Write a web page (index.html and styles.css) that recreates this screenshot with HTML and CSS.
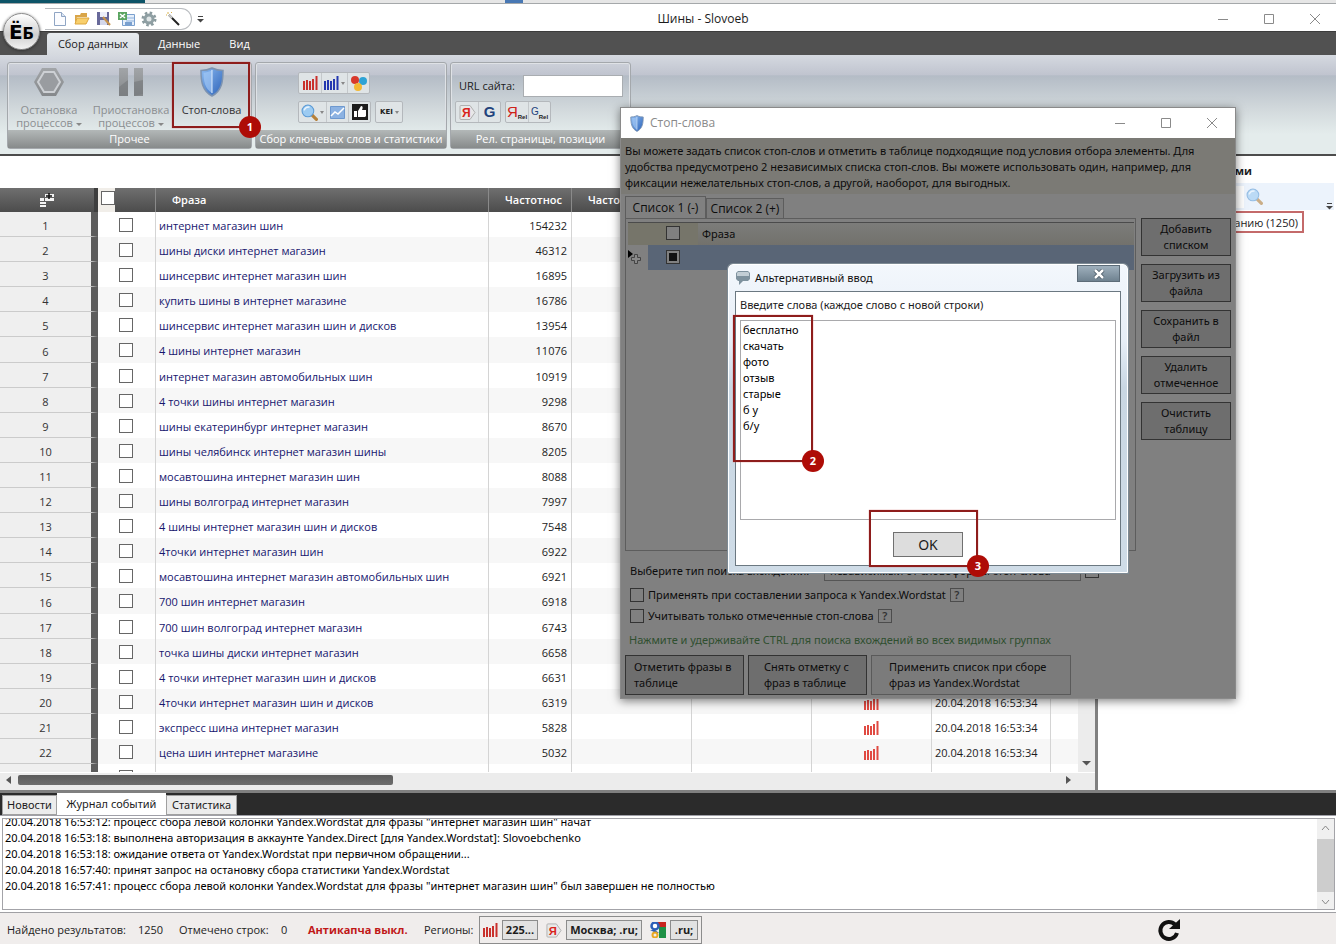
FILE: index.html
```html
<!DOCTYPE html>
<html lang="ru">
<head>
<meta charset="utf-8">
<title>Шины - Slovoeb</title>
<link rel="stylesheet" href="styles.css">
</head>
<body>
<svg class="defs" aria-hidden="true">
  <defs>
    <linearGradient id="shieldFill" x1="0" y1="0" x2="1" y2="1"><stop offset="0" stop-color="#8dbcf2"/><stop offset="1" stop-color="#2c62b8"/></linearGradient>
    <linearGradient id="grayFill" x1="0" y1="0" x2="0" y2="1"><stop offset="0" stop-color="#a2a5a8"/><stop offset="1" stop-color="#85888b"/></linearGradient>
    <symbol id="bars" viewBox="0 0 15 14"><path d="M1 5v9M4 4v10M7 5v9M10 3v11M13.500 0v14" stroke="currentColor" stroke-width="2" fill="none"/></symbol>
    <symbol id="shield" viewBox="0 0 24 30"><path d="M12 1C8 3 4 3.500 1 3.500C1 14 2 24 12 29C22 24 23 14 23 3.500C20 3.500 16 3 12 1Z" fill="url(#shieldFill)" stroke="#7d93b0" stroke-width="1.500"/><path d="M12 3C9 5 6 5.500 3.500 5.500C3.500 14 5 22 12 26Z" fill="#a9cdf8" opacity=".6"/><path d="M12 3v23" stroke="#dcebfc"/></symbol>
    <symbol id="lens" viewBox="0 0 16 16"><path d="M10 10l4.500 4.500" stroke="#b5803a" stroke-width="3" stroke-linecap="round"/><circle cx="6.500" cy="6.500" r="5.500" fill="#9ccbf2" stroke="#5b9ad5"/><path d="M3 6a4 4 0 0 1 5-3" stroke="#eaf5fe" stroke-width="1.500" fill="none"/></symbol>
    <symbol id="yandex" viewBox="0 0 17 17"><path d="M2 1.500h9l5 7-5 7H2a1 1 0 0 1-1-1v-12a1 1 0 0 1 1-1Z" fill="#e8e8e8" stroke="#b0b0b0"/><text class="ya-letter" x="3" y="13">Я</text></symbol>
  </defs>
</svg>

<div class="backdrop"><span></span></div>

<header class="titlebar">
  <div class="quick">
    <button class="quick-btn" aria-label="Создать"><svg width="16" height="16" viewBox="0 0 16 16"><path d="M2.500 1.500h7l4 4v9h-11Z" fill="#fbfcff" stroke="#8fa5c4"/><path d="M9.500 1.500v4h4" fill="#dce6f4" stroke="#8fa5c4"/></svg></button>
    <button class="quick-btn" aria-label="Открыть"><svg width="16" height="16" viewBox="0 0 16 16"><path d="M1 4h5l1-2h6v4H3l-2 7Z" fill="#d9a548"/><path d="M3 7h12l-3 6H1Z" fill="#f8cf6c" stroke="#dca63e"/></svg></button>
    <button class="quick-btn" aria-label="Сохранить"><svg width="16" height="16" viewBox="0 0 16 16"><path d="M1 1h12v13H1Z" fill="#68699a"/><path d="M4 1h7v5H4Z" fill="#eceefa"/><path d="M4 9h7v5H4Z" fill="#d3d7ea"/><path d="M7 6l7 8" stroke="#c6934b" stroke-width="2"/></svg></button>
    <button class="quick-btn" aria-label="Экспорт"><svg width="17" height="16" viewBox="0 0 17 16"><path d="M4.500 3.500h12v11h-12Z" fill="#e6effa" stroke="#7aa0cf"/><path d="M8 7h8M8 10h8" stroke="#8db1dd"/><path d="M7 11h7v4H7Z" fill="#7aa0cf"/><path d="M0 1h9v8H0Z" fill="#5aa561"/><path d="M2 3l5 4M7 3L2 7" stroke="#fff" stroke-width="1.500"/></svg></button>
    <button class="quick-btn" aria-label="Настройки"><svg width="16" height="16" viewBox="0 0 16 16"><circle cx="8" cy="8" r="6" fill="none" stroke="#8a9a9e" stroke-width="3" stroke-dasharray="2.400 2.300"/><circle cx="8" cy="8" r="4" fill="#e0e6e7" stroke="#8f9fa3" stroke-width="3"/></svg></button>
    <button class="quick-btn wand" aria-label="Мастер"><svg width="16" height="16" viewBox="0 0 16 16"><path d="M4 4l10 10" stroke="#222" stroke-width="2"/><path d="M4 4l3 3" stroke="#c9c9c9" stroke-width="2"/><path d="M3 1v2M1 4h1M6 2l1-1" stroke="#d8b24a"/></svg></button>
  </div>
  <button class="quick-more" aria-label="Ещё"><svg width="7" height="8" viewBox="0 0 7 8"><path d="M1 1.500h5" stroke="#444"/><path d="M0 4h7L3.500 7.500Z" fill="#444"/></svg></button>
  <h1 class="title">Шины - Slovoeb</h1>
  <div class="win-buttons">
    <button aria-label="Свернуть"><svg width="12" height="12" viewBox="0 0 12 12"><path d="M1 6.500h10"/></svg></button>
    <button aria-label="Развернуть"><svg width="12" height="12" viewBox="0 0 12 12"><path d="M1.500 1.500h9v9h-9Z"/></svg></button>
    <button aria-label="Закрыть"><svg width="12" height="12" viewBox="0 0 12 12"><path d="M1 1l10 10M11 1L1 11"/></svg></button>
  </div>
  <div class="logo">Ё<small>Б</small></div>
</header>

<nav class="tabs">
  <button class="tab active">Сбор данных</button>
  <button class="tab">Данные</button>
  <button class="tab">Вид</button>
</nav>

<section class="ribbon">
  <div class="group group-misc">
    <div class="group-body big">
      <button class="big-btn off"><svg width="32" height="30" viewBox="0 0 32 30"><path d="M9 1h14l8 14-8 14H9L1 15Z" fill="url(#grayFill)"/><path d="M11 5h10l6 10-6 10H11L5 15Z" fill="#999ca0" stroke="#cdd0d4" stroke-width="2"/></svg><span>Остановка<br>процессов <i class="caret"></i></span></button>
      <button class="big-btn off"><svg width="26" height="30" viewBox="0 0 26 30"><path d="M1 1h9v28H1ZM16 1h9v28h-9Z" fill="url(#grayFill)"/><path d="M1 20l9-7v16H1ZM16 15l9-2v14l-9 2Z" fill="#75787b" opacity=".6"/></svg><span>Приостановка<br>процессов <i class="caret"></i></span></button>
      <button class="big-btn stop"><svg width="26" height="30"><use href="#shield"/></svg><span>Стоп-слова</span></button>
      <div class="mark mark-1"><b class="badge">1</b></div>
    </div>
    <div class="group-name">Прочее</div>
  </div>
  <div class="group group-keys">
    <div class="group-body rows">
      <div class="tool-row">
        <div class="tools"><button class="red" aria-label="Wordstat"><svg width="15" height="14"><use href="#bars"/></svg></button><button class="blue" aria-label="Статистика"><svg width="15" height="14"><use href="#bars"/></svg><i class="caret"></i></button><button aria-label="Подсказки"><svg width="16" height="17" viewBox="0 0 16 17"><circle cx="4" cy="5" r="4" fill="#d8392c"/><circle cx="12" cy="6" r="4" fill="#2ea3d5"/><circle cx="7" cy="12" r="4" fill="#f3b834"/></svg></button></div>
      </div>
      <div class="tool-row">
        <div class="tools"><button aria-label="Поиск"><svg width="17" height="17"><use href="#lens"/></svg><i class="caret"></i></button><button aria-label="График"><svg width="15" height="13" viewBox="0 0 15 13"><path d="M.5.5h14v12H.5Z" fill="#8cb2e2" stroke="#6d98cf"/><path d="M1 10l4-4 3 2 6-6" stroke="#fff" fill="none" stroke-width="1.500"/></svg></button><button aria-label="Нравится"><svg width="16" height="16" viewBox="0 0 16 16"><path d="M0 0h16v16H0Z" fill="#1c1c1c"/><path d="M2 7h3v6H2ZM6 7l3-5c2 0 2 2 1 4h4v6l-1 1H6Z" fill="#fff"/></svg></button></div>
        <div class="tools"><button class="kei">KEI <i class="caret"></i></button></div>
      </div>
    </div>
    <div class="group-name">Сбор ключевых слов и статистики</div>
  </div>
  <div class="group group-pos">
    <div class="group-body rows">
      <div class="url-row"><label for="url">URL сайта:</label><input id="url" type="text"></div>
      <div class="tool-row left">
        <div class="tools"><button aria-label="Яндекс"><svg width="17" height="17"><use href="#yandex"/></svg></button><button class="g">G</button></div>
        <div class="tools"><button class="ya">Я<small>Rel</small></button><button class="g small">G<small>Rel</small></button></div>
      </div>
    </div>
    <div class="group-name">Рел. страницы, позиции</div>
  </div>
</section>

<main class="work">
  <section class="grid-pane">
    <div class="grid-main">
      <div class="grid-clip">
        <table class="grid">
          <colgroup><col class="c-num"><col class="c-check"><col class="c-phrase"><col class="c-freq"><col class="c-wide"><col class="c-wide"><col class="c-wide"><col class="c-date"><col></colgroup>
          <thead><tr>
            <th class="num"><svg width="14" height="14" viewBox="0 0 14 14"><path d="M5 1h9v3H5ZM5 5h9v3H5ZM0 5h4v3H0ZM0 9h6v2H0ZM0 12h6v2H0Z" fill="#f2f2f2"/><path d="M9 0v6M6 3h6" stroke="#111" stroke-width="1.500"/></svg></th>
            <th class="all"><input type="checkbox" aria-label="Отметить все"></th>
            <th class="name">Фраза</th><th class="freq">Частотнос</th><th class="freq">Частотнос</th><th></th><th></th><th></th><th></th>
          </tr></thead>
          <tbody id="rows"></tbody>
        </table>
      </div>
      <div class="vscroll"><svg width="9" height="5" viewBox="0 0 9 5"><path d="M0 0h9L4.500 4.500Z" fill="#555"/></svg></div>
    </div>
    <div class="hscroll">
      <svg width="5" height="8" viewBox="0 0 5 8"><path d="M5 0v8L0 4Z" fill="#555"/></svg>
      <div class="track"><div class="thumb"></div></div>
      <svg width="5" height="8" viewBox="0 0 5 8"><path d="M0 0v8L5 4Z" fill="#555"/></svg>
    </div>
  </section>
  <aside class="side">
    <h2>ами</h2>
    <div class="side-tools"><input type="text" aria-label="Поиск группы"><svg class="lens" width="17" height="17"><use href="#lens"/></svg><svg class="more" width="7" height="8" viewBox="0 0 7 8"><path d="M1 1.500h5" stroke="#444"/><path d="M0 4h7L3.500 7.500Z" fill="#444"/></svg></div>
    <div class="side-item">анию (1250)</div>
  </aside>
</main>

<section class="journal">
  <nav class="log-tabs"><button>Новости</button><button class="active">Журнал событий</button><button>Статистика</button></nav>
  <div class="log-frame">
    <div class="log">
      <p>20.04.2018 16:53:12: процесс сбора левой колонки Yandex.Wordstat для фразы "интернет магазин шин" начат</p>
      <p>20.04.2018 16:53:18: выполнена авторизация в аккаунте Yandex.Direct [для Yandex.Wordstat]: Slovoebchenko</p>
      <p>20.04.2018 16:53:18: ожидание ответа от Yandex.Wordstat при первичном обращении...</p>
      <p>20.04.2018 16:57:40: принят запрос на остановку сбора статистики Yandex.Wordstat</p>
      <p>20.04.2018 16:57:41: процесс сбора левой колонки Yandex.Wordstat для фразы "интернет магазин шин" был завершен не полностью</p>
    </div>
    <div class="log-scroll"><svg width="9" height="6" viewBox="0 0 9 6"><path d="M1 5l3.500-4L8 5"/></svg><div class="log-thumb"></div><svg width="9" height="6" viewBox="0 0 9 6"><path d="M1 1l3.500 4L8 1"/></svg></div>
  </div>
</section>

<footer class="status">
  <span class="found">Найдено результатов:</span><span class="found-n">1250</span>
  <span class="marked">Отмечено строк:</span><span class="marked-n">0</span>
  <strong class="captcha">Антикапча выкл.</strong>
  <span class="regions-label">Регионы:</span>
  <div class="regions">
    <svg class="red" width="15" height="14"><use href="#bars"/></svg><button class="r-short">225...</button>
    <svg class="next" width="16" height="17"><use href="#yandex"/></svg><button class="r-long">Москва; .ru;</button>
    <svg class="next" width="16" height="16" viewBox="0 0 16 16"><path d="M6 0h10v5H9Z" fill="#c9251f"/><path d="M9 5h7v11H9Z" fill="#1f9146"/><circle cx="5" cy="4" r="3.500" fill="#fff" stroke="#2c5fb8" stroke-width="2.500"/><path d="M0 8h5l4 3H6Z" fill="#2c5fb8"/><circle cx="5" cy="13" r="2.500" fill="none" stroke="#e9a822" stroke-width="2"/></svg><button class="r-tiny">.ru;</button>
  </div>
  <button class="refresh" aria-label="Обновить"><svg width="24" height="24" viewBox="0 0 24 24"><path d="M18 6.500A8.500 8.500 0 1 0 20 15" fill="none" stroke="#111" stroke-width="4"/><path d="M23 1v10H12Z" fill="#111"/></svg></button>
</footer>

<section class="window stopwords" role="dialog" aria-labelledby="sw-title">
  <header class="window-title"><svg width="14" height="17"><use href="#shield"/></svg><h2 id="sw-title">Стоп-слова</h2>
    <div class="win-buttons">
      <button aria-label="Свернуть"><svg width="12" height="12" viewBox="0 0 12 12"><path d="M1 6.500h10"/></svg></button>
      <button aria-label="Развернуть"><svg width="12" height="12" viewBox="0 0 12 12"><path d="M1.500 1.500h9v9h-9Z"/></svg></button>
      <button aria-label="Закрыть"><svg width="12" height="12" viewBox="0 0 12 12"><path d="M1 1l10 10M11 1L1 11"/></svg></button>
    </div>
  </header>
  <p class="intro">Вы можете задать список стоп-слов и отметить в таблице подходящие под условия отбора элементы. Для<br>удобства предусмотрено 2 независимых списка стоп-слов. Вы можете использовать один, например, для<br>фиксации нежелательных стоп-слов, а другой, наоборот, для выгодных.</p>
  <div class="sw-main">
    <div class="sw-left">
      <nav class="sw-tabs"><button class="active">Список 1 (-)</button><button>Список 2 (+)</button></nav>
      <div class="sw-panel">
        <div class="sw-head"><div class="sw-all"><input type="checkbox" aria-label="Все фразы"></div><span>Фраза</span></div>
        <div class="sw-row"><svg width="15" height="16" viewBox="0 0 15 16"><path d="M0 0v8l5-4Z" fill="#000"/><path d="M6.500 4.500h3v3h3v3h-3v3h-3v-3h-3v-3h3Z" fill="#888" stroke="#444"/></svg><div class="sw-cell"><input class="mixed" type="checkbox" aria-label="Новая фраза"></div></div>
      </div>
    </div>
    <div class="sw-actions">
      <button>Добавить<br>списком</button><button>Загрузить из<br>файла</button><button>Сохранить в<br>файл</button><button>Удалить<br>отмеченное</button><button>Очистить<br>таблицу</button>
    </div>
  </div>
  <div class="sw-type"><label for="kind">Выберите тип поиска вхождений:</label><select id="kind"><option>независимый от словоформы стоп-слова</option></select><input type="checkbox" aria-label="Тип"></div>
  <div class="sw-check"><input id="wordstat" type="checkbox"><label for="wordstat">Применять при составлении запроса к Yandex.Wordstat</label><button class="help">?</button></div>
  <div class="sw-check"><input id="only" type="checkbox"><label for="only">Учитывать только отмеченные стоп-слова</label><button class="help">?</button></div>
  <p class="hint">Нажмите и удерживайте CTRL для поиска вхождений во всех видимых группах</p>
  <div class="sw-buttons"><button>Отметить фразы в<br>таблице</button><button>Снять отметку с<br>фраз в таблице</button><button class="wide">Применить список при сборе<br>фраз из Yandex.Wordstat</button></div>
</section>

<section class="window words" role="dialog" aria-labelledby="w-title">
  <header><svg width="14" height="14" viewBox="0 0 14 14"><path d="M2 0h10l2 2v6l-2 2H7l-4 4v-4H2L0 8V2Z" fill="#7f929e"/><path d="M2 1h10l1 1v3H1V2Z" fill="#c3ced5"/></svg><h2 id="w-title">Альтернативный ввод</h2><button class="words-close" aria-label="Закрыть"><svg width="12" height="10" viewBox="0 0 12 10"><path d="M2 1l8 8M10 1L2 9" stroke="#3f4f5c" stroke-width="4"/><path d="M2 1l8 8M10 1L2 9" stroke="#fff" stroke-width="2.500"/></svg></button></header>
  <div class="words-body">
    <label for="words">Введите слова (каждое слово с новой строки)</label>
    <textarea id="words">бесплатно
скачать
фото
отзыв
старые
б у
б/у</textarea>
    <button class="ok">OK</button>
  </div>
  <div class="mark mark-2"><b class="badge">2</b></div>
  <div class="mark mark-3"><b class="badge">3</b></div>
</section>
<script src="app.js"></script>
</body>
</html>
```
FILE: styles.css
```css
* { box-sizing: border-box; }
body {
  margin: 0;
  height: 100vh;
  display: flex;
  flex-direction: column;
  position: relative;
  overflow: hidden;
  background: #fff;
  color: #1c1c1c;
  font: 11px/16px "Open Sans", "Noto Sans", sans-serif;
}
button, input, select, textarea { font: inherit; color: inherit; margin: 0; }
button { padding: 0; border: 0; background: none; white-space: nowrap; }
h1, h2, p { margin: 0; font-size: 11px; font-weight: 400; }
svg { display: block; flex: none; }
.defs { position: absolute; width: 0; height: 0; }
input[type="checkbox"] {
  appearance: none;
  width: 14px;
  height: 14px;
  flex: none;
  border: 1px solid #666;
  background: #fff;
}
.red { color: #c9302c; }
.blue { color: #2438b0; }
.caret { display: inline-block; border: 3px solid transparent; border-top-color: #888; border-bottom: 0; vertical-align: middle; }
.ya-letter { font: 700 12px "Liberation Sans", sans-serif; fill: #d9231b; }

.backdrop { flex: none; height: 4px; background: linear-gradient(90deg, #0d5468 145px, #e6e6e6 145px); border-bottom: 1px solid #a5a8aa; }
.backdrop span { display: block; width: 18px; height: 3px; margin-left: 505px; background: #4878b4; }

.titlebar { flex: none; height: 27px; display: flex; align-items: center; position: relative; padding: 4px 0 2px 45px; }
.quick { flex: none; width: 147px; height: 22px; display: flex; align-items: center; gap: 6px; padding-left: 7px; border: 1px solid #b9bcc0; border-left: 0; border-radius: 0 11px 11px 0; }
.wand { margin-left: 2px; }
.quick-more { margin-left: 5px; }
.title { flex: 1; padding-right: 63px; text-align: center; font-size: 12px; }
.win-buttons { display: flex; gap: 34px; padding-right: 15px; }
.win-buttons svg { fill: none; stroke: #8a8a8a; }
.titlebar .win-buttons { margin-left: -48px; }
.logo {
  position: absolute; left: 3px; top: 9px; width: 37px; height: 37px; z-index: 2;
  border: 1px solid #8a8a8a; border-radius: 50%;
  background: linear-gradient(#fff, #cfcfcf 60%, #f2f2f2);
  box-shadow: 0 1px 3px #333;
  color: #000; font: 700 20px/36px "DejaVu Sans", sans-serif; text-align: center;
}
.logo small { font-size: 15px; }

.tabs { flex: none; height: 24px; display: flex; align-items: flex-end; padding-left: 47px; background: #515151; border-top: 1px solid #3c3c3c; }
.tab { width: 80px; height: 22px; color: #fff; }
.tab:last-child { width: 41px; }
.tab.active { width: 92px; border-radius: 3px 3px 0 0; background: linear-gradient(#e8ecef, #d5d9df); color: #1c1c1c; }

.ribbon {
  flex: none; height: 101px; display: flex; gap: 3px; padding: 7px 7px 5px;
  border-bottom: 2px solid #4c4c4c;
  background: linear-gradient(#d5d9e0, #c0c4cf 20%, #b4bcc6 21%, #d2d9dc 55%, #e4ecec 80%, #e4ecec);
}
.group { display: flex; flex-direction: column; border: 1px solid #a4a8ac; border-radius: 3px; box-shadow: inset 0 0 0 1px #dfe2e6; }
.group-misc { width: 245px; }
.group-keys { width: 192px; }
.group-pos { width: 181px; }
.group-body { flex: 1; }
.group-name { height: 18px; line-height: 18px; text-align: center; white-space: nowrap; overflow: hidden; color: #fff; background: linear-gradient(#b3b8b8, #878b8b); }
.big { display: flex; position: relative; padding: 4px 0 0; }
.big-btn { width: 82px; height: 62px; display: flex; flex-direction: column; align-items: center; gap: 4px; line-height: 13px; color: #333; }
.big-btn.off { color: #8b8e91; }
.big-btn span { padding-top: 2px; }
.big-btn.stop { width: 79px; }
.rows { display: flex; flex-direction: column; align-items: stretch; gap: 7px; padding: 9px 4px 0; }
.tool-row { display: flex; gap: 4px; padding-left: 38px; }
.tool-row.left { padding-left: 0; }
.tools { display: flex; height: 22px; border: 1px solid #b4b8bc; border-radius: 2px; background: #dfe4e6; }
.tools button { min-width: 22px; display: flex; align-items: center; justify-content: center; gap: 2px; padding: 0 2px; }
.tools button + button { border-left: 1px solid #c4c8cb; }
.tools .kei { padding: 0 3px 0 4px; font: 700 7px/16px "DejaVu Sans", sans-serif; }
.tools .caret { border-width: 3px 2px 0; }
.url-row { display: flex; align-items: center; height: 22px; margin-top: 3px; gap: 9px; padding-left: 4px; }
.group-pos .rows { gap: 4px; }
.url-row label { width: 55px; white-space: nowrap; }
.url-row input { width: 100px; height: 22px; border: 1px solid #a9adb1; background: #fff; }
.tools .g, .tools .ya { padding: 0; gap: 0; font: 400 15px/18px "Liberation Sans", sans-serif; color: #22427c; }
.tools .g { font-weight: 700; }
.tools .g.small { font-size: 10px; font-weight: 400; }
.tools .ya { color: #cf2218; }
.tools small { font: 700 6px/6px "Liberation Sans", sans-serif; color: #222; padding-top: 9px; }

.work { flex: 1; min-height: 0; display: flex; border-bottom: 3px solid #808080; }
.grid-pane { flex: 1; min-width: 0; display: flex; flex-direction: column; padding-top: 32px; border-right: 3px solid #808080; }
.grid-main { flex: 1; min-height: 0; display: flex; }
.grid-clip { flex: 1; min-width: 0; overflow: hidden; }
.grid { width: 100%; table-layout: fixed; border-collapse: separate; border-spacing: 0; }
.c-num { width: 98px; } .c-check { width: 57px; } .c-phrase { width: 333px; } .c-freq { width: 83px; } .c-wide { width: 120px; } .c-date { width: 119px; }
.grid th { height: 24px; padding: 0 16px; background: linear-gradient(#6f6f6f, #4c4c4c); color: #fff; font-weight: 600; text-align: left; overflow: hidden; white-space: nowrap; border-left: 1px solid #8a8a8a; }
.grid th.num { border-right: 4px solid #3e3e3e; border-left: 0; }
.grid th.num svg { margin: 0 auto; }
.grid th.all { padding: 0 3px 4px; line-height: 0; border-left: 0; background: linear-gradient(90deg, #f1eee9 17px, transparent 17px), linear-gradient(#6f6f6f, #4c4c4c); }
.grid td { height: 25px; padding: 2px 4px 0 3px; overflow: hidden; white-space: nowrap; border-left: 1px solid #d4d4d4; }
.grid tbody tr:nth-child(10n+6) td { height: 26px; }
.grid tbody tr:nth-child(even) td { background: #f7f7f7; }
.grid tbody td.num, .grid tbody tr:nth-child(even) td.num { padding: 4px 0 0; text-align: center; color: #333; background: #efefef; border-left: 0; border-bottom: 1px solid #cbcbcb; border-right: 7px solid #5c5c5c; }
.grid td.check { border-left: 0; line-height: 0; text-align: center; padding: 0 1px 0 0; }
.grid td.phrase { color: #16166e; }
.grid td.freq { text-align: right; }
.grid td.icon svg { margin: 0 auto; color: #e04a42; }
.vscroll { width: 17px; display: flex; align-items: flex-end; justify-content: center; padding-bottom: 6px; background: #ececec; }
.hscroll { flex: none; height: 18px; display: flex; align-items: center; gap: 7px; padding: 0 24px 3px 6px; background: #ececec; border-top: 1px solid #fff; }
.track { flex: 1; }
.thumb { width: 36%; height: 10px; border-radius: 2px; background: linear-gradient(#5c5c5c, #6d6d6d); }

.side { width: 238px; }
.side h2 { padding: 7px 84px 0 0; text-align: right; font-weight: 700; height: 27px; }
.side-tools { height: 27px; display: flex; align-items: center; padding: 0 1px; background: #ecf3fc; margin-right: 2px; }
.side-tools input { width: 145px; height: 22px; border: 0; background: #fff; }
.lens { margin-left: 2px; opacity: .6; }
.more { margin-left: auto; align-self: flex-end; }
.side-item { width: 206px; height: 22px; margin-top: 1px; padding: 2px 4px; border: 2px solid #c46a6a; text-align: right; }

.journal { flex: none; font-family: "Noto Sans", sans-serif; }
.log-tabs { height: 23px; display: flex; align-items: flex-end; padding-left: 2px; background: #2b2b2b; border-bottom: 1px solid #a0a0a8; }
.log-tabs button { height: 20px; width: 55px; background: #ececec; border: 1px solid #a0a0a0; }
.log-tabs .active { width: 109px; height: 22px; background: #fff; border: 0; }
.log-tabs button:last-child { width: 71px; }
.log-frame { height: 92px; margin: 2px 1px 2px 2px; display: flex; border: 1px solid #a3a3a8; }
.log { flex: 1; display: flex; flex-direction: column; justify-content: flex-end; overflow: hidden; padding: 0 2px 15px; }
.log p { flex: none; white-space: nowrap; color: #000; }
.log-scroll { width: 17px; display: flex; flex-direction: column; align-items: center; padding: 6px 0 4px; background: #f0f0f0; }
.log-scroll svg { fill: none; stroke: #888; }
.log-thumb { flex: 1; align-self: stretch; margin: 8px 0 7px; background: #cdcdcd; }

.status { flex: none; height: 32px; display: flex; align-items: center; padding: 3px 0 0 7px; background: #f0edec; border-top: 1px solid #a0a0a4; white-space: nowrap; }
.found { width: 131px; } .found-n { width: 41px; } .marked { width: 102px; } .marked-n { width: 27px; }
.captcha { width: 116px; color: #c01818; }
.regions-label { width: 50px; }
.regions { height: 28px; display: flex; align-items: center; margin-left: 5px; padding: 0 3px; border: 1px solid #8c8c8c; }
.regions button { height: 20px; margin-left: 4px; border: 1px solid #8c8c8c; background: #e2e2e2; font-weight: 700; }
.regions .r-short { width: 36px; } .regions .r-long { width: 76px; } .regions .r-tiny { width: 28px; }
.next { margin-left: 8px; }
.refresh { margin-left: auto; margin-right: 155px; }

.window { position: absolute; font-family: "Noto Sans", sans-serif; }
.stopwords { left: 620px; top: 107px; width: 616px; border: 1px solid #8a8a8a; background: #808080; color: #0c0c0c; box-shadow: 0 2px 9px rgba(0,0,0,.5); padding-bottom: 3px; }
.window-title { height: 30px; display: flex; align-items: center; padding-left: 9px; gap: 6px; background: #fff; color: #8a8a8a; }
.window-title h2 { font: 12px/16px "Open Sans", sans-serif; }
.window-title .win-buttons { margin-left: auto; padding-right: 17px; }
.intro { height: 56px; padding: 5px 4px; background: #7b7a75; white-space: nowrap; }
.sw-main { display: flex; gap: 5px; padding: 2px 4px 0; }
.sw-left { flex: 1; }
.sw-tabs { display: flex; align-items: flex-end; height: 22px; }
.sw-tabs button { width: 78px; height: 20px; border: 1px solid #5d5d5d; border-bottom: 0; background: #7b7b7b; font: 12px/16px "Open Sans", sans-serif; }
.sw-tabs .active { width: 81px; height: 22px; background: #808080; }
.sw-panel { height: 333px; padding: 3px 1px 0 2px; border: 1px solid #5d5d5d; }
.sw-head { height: 23px; display: flex; align-items: center; gap: 4px; border-top: 1px solid #4b4b4b; background: linear-gradient(#7c7c7a, #72716c); }
.sw-all { width: 70px; height: 22px; padding: 3px 0 0 38px; background: #76756a; line-height: 0; }
.sw-row { display: flex; gap: 5px; height: 25px; align-items: center; }
.sw-cell { flex: 1; height: 25px; padding: 5px 18px; background: #596576; line-height: 0; }
.stopwords input[type="checkbox"] { background: #808080; border-color: #333; }
.stopwords input.mixed[type="checkbox"] { background: #111; box-shadow: inset 0 0 0 2px #808080; }
.sw-actions { width: 90px; display: flex; flex-direction: column; gap: 8px; padding-top: 22px; }
.sw-actions button, .sw-buttons button { height: 38px; border: 1px solid #333; background: #6e6e6e; line-height: 16px; }
.sw-type { height: 32px; display: flex; align-items: center; padding: 8px 9px 0; }
.sw-type label { width: 194px; white-space: nowrap; }
.sw-type select { width: 257px; height: 20px; padding: 0 5px; appearance: none; border: 1px solid #555; border-radius: 0; background: #808080; }
.sw-type input { margin-left: 4px; }
.sw-check { height: 21px; display: flex; align-items: center; gap: 4px; padding-left: 9px; white-space: nowrap; }
.sw-type + .sw-check { margin-top: 1px; }
.help { width: 14px; height: 14px; line-height: 12px; border: 1px solid #4c4c4c; font-weight: 600; color: #333; }
.hint { padding: 6px 8px 0; color: #2f4f2f; height: 29px; white-space: nowrap; }
.sw-buttons { display: flex; gap: 4px; padding-left: 4px; }
.sw-buttons button { width: 119px; height: 40px; text-align: left; padding-left: 8px; }
.sw-buttons button + button { padding-left: 15px; }
.sw-buttons button.wide { width: 200px; padding-left: 17px; background: #7b7b7b; border-color: #5a5a5a; }

.words { left: 728px; top: 264px; width: 400px; border: 1px solid #fff; border-radius: 5px 5px 0 0; background: linear-gradient(#f3f7fc, #e6eef7 25%, #c9d7e3 40%, #cfdce7); padding: 0 6px 6px; box-shadow: 0 0 0 1px #7d8a94; }
.words header { height: 26px; display: flex; align-items: center; gap: 5px; padding-left: 1px; color: #111; }
.words-close { width: 43px; height: 17px; margin-left: auto; margin-right: 1px; align-self: flex-start; display: flex; align-items: center; justify-content: center; border: 1px solid #5d6c78; background: linear-gradient(#9fb0bd, #6f8290); }
.words-body { display: flex; flex-direction: column; padding: 5px 4px 8px; border: 1px solid #6b7881; background: #fff; }
.words-body label { height: 23px; }
.words-body textarea { height: 200px; padding: 1px 2px; border: 1px solid #a9a9ac; border-radius: 0; background: #fff; resize: none; color: #000; outline: 0; overflow: hidden; }
.ok { width: 70px; height: 25px; margin: 12px auto 0; border: 1px solid #707070; background: #ddd; font-size: 14px; }

.mark { position: absolute; border: 2px solid #8e1d1c; box-shadow: 0 0 1px #c66; pointer-events: none; }
.mark-1 { left: 164px; top: -1px; width: 78px; height: 66px; }
.mark-2 { left: 4px; top: 50px; width: 80px; height: 147px; }
.mark-3 { left: 140px; top: 245px; width: 109px; height: 57px; }
.badge { position: absolute; right: -13px; bottom: -12px; width: 22px; height: 22px; border-radius: 50%; background: #ae0c06; color: #fff; font: 700 11px/22px "Open Sans", sans-serif; text-align: center; }
```
FILE: app.js
```js
const rows = [
  ["интернет магазин шин", 154232],
  ["шины диски интернет магазин", 46312],
  ["шинсервис интернет магазин шин", 16895],
  ["купить шины в интернет магазине", 16786],
  ["шинсервис интернет магазин шин и дисков", 13954],
  ["4 шины интернет магазин", 11076],
  ["интернет магазин автомобильных шин", 10919],
  ["4 точки шины интернет магазин", 9298],
  ["шины екатеринбург интернет магазин", 8670],
  ["шины челябинск интернет магазин шины", 8205],
  ["мосавтошина интернет магазин шин", 8088],
  ["шины волгоград интернет магазин", 7997],
  ["4 шины интернет магазин шин и дисков", 7548],
  ["4точки интернет магазин шин", 6922],
  ["мосавтошина интернет магазин автомобильных шин", 6921],
  ["700 шин интернет магазин", 6918],
  ["700 шин волгоград интернет магазин", 6743],
  ["точка шины диски интернет магазин", 6658],
  ["4 точки интернет магазин шин и дисков", 6631],
  ["4точки интернет магазин шин и дисков", 6319],
  ["экспресс шина интернет магазин", 5828],
  ["цена шин интернет магазине", 5032],
  ["", ""]
];

document.getElementById("rows").innerHTML = rows.map(([phrase, freq], i) => `
  <tr>
    <td class="num">${phrase ? i + 1 : ""}</td>
    <td class="check"><input type="checkbox" aria-label="Строка ${i + 1}"></td>
    <td class="phrase">${phrase}</td>
    <td class="freq">${freq}</td>
    <td></td><td></td>
    <td class="icon">${phrase ? '<svg width="15" height="14"><use href="#bars"/></svg>' : ""}</td>
    <td>${phrase ? "20.04.2018 16:53:34" : ""}</td>
    <td></td>
  </tr>`).join("");
```
